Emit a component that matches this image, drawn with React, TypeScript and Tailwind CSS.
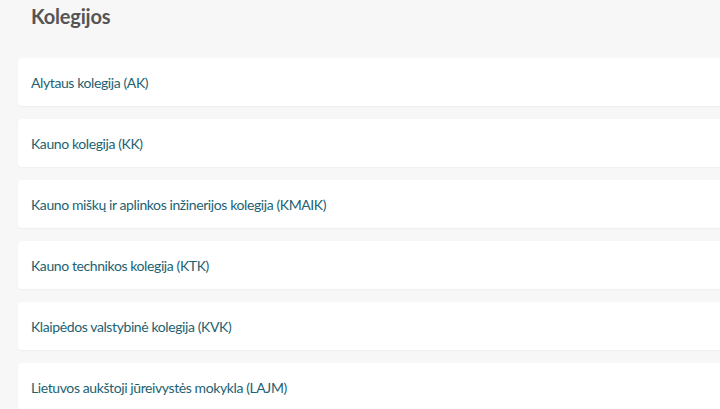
const colleges = [
  'Alytaus kolegija (AK)',
  'Kauno kolegija (KK)',
  'Kauno miškų ir aplinkos inžinerijos kolegija (KMAIK)',
  'Kauno technikos kolegija (KTK)',
  'Klaipėdos valstybinė kolegija (KVK)',
  'Lietuvos aukštoji jūreivystės mokykla (LAJM)',
];

export default function App() {
  return (
    <div className="h-screen bg-[#f7f7f7] font-['Lato',sans-serif] overflow-hidden">
      <div className="pl-[18px] -mr-4">
        <h2 className="pl-[13px] pt-[3px] text-[20px] leading-[26px] font-bold tracking-[-0.2px] text-[#555555]">Kolegijos</h2>
        <ul className="mt-[29px] flex flex-col gap-[13px]">
          {colleges.map((name) => (
            <li
              key={name}
              className="h-[48px] shrink-0 flex items-center pl-[13px] bg-white rounded-[4px] shadow-[0_1px_2px_rgba(0,0,0,0.04)]"
            >
              <a href="#" className="text-[14px] tracking-[-0.4px] text-[#1d6272]">{name}</a>
            </li>
          ))}
        </ul>
      </div>
    </div>
  );
}
